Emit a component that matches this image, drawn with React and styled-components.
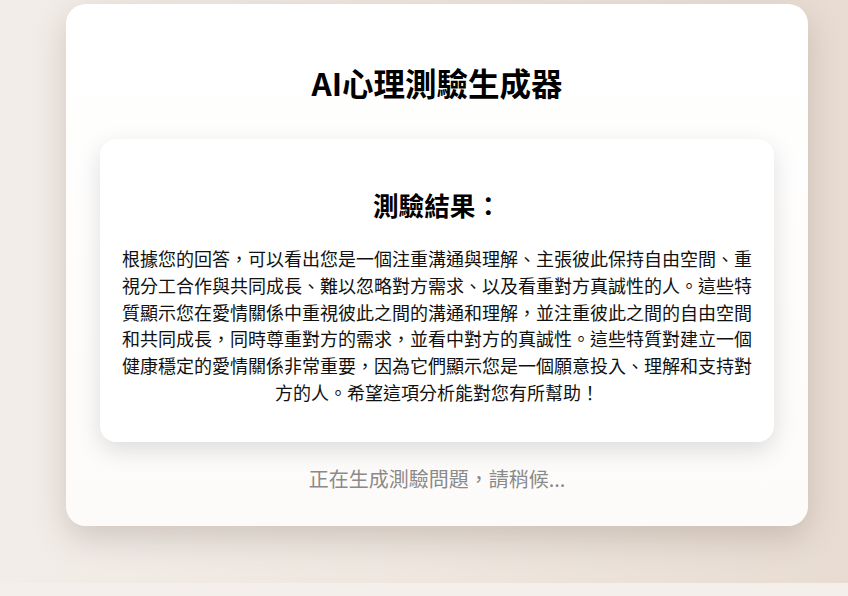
import styled, { createGlobalStyle } from "styled-components";

const GlobalStyle = createGlobalStyle`
  html, body {
    margin: 0;
    padding: 0;
    background: #f4efea;
  }
  body {
    font-family: "Noto Sans CJK TC", "Noto Sans", sans-serif;
    color: #111;
  }
`;

const Page = styled.div`
  height: 583px;
  box-sizing: border-box;
  padding: 4px 40px 0 66px;
  background: linear-gradient(90deg, #f2ede8 0%, #eee6df 50%, #e8dcd2 100%);
  overflow: hidden;
`;

const Card = styled.main`
  width: 742px;
  box-sizing: border-box;
  padding: 58px 34px 34px;
  background: linear-gradient(180deg, #ffffff 0%, #fdfbf9 100%);
  border-radius: 20px;
  box-shadow: 0 12px 32px rgba(90, 70, 55, 0.22);
  display: flex;
  flex-direction: column;
  align-items: stretch;
`;

const Title = styled.h1`
  margin: 0 0 37px;
  font-size: 31.5px;
  line-height: 40px;
  font-weight: 700;
  text-align: center;
  color: #000;
`;

const ResultBox = styled.section`
  background: #fff;
  border-radius: 16px;
  padding: 48px 21px 36px;
  box-shadow: 0 8px 24px rgba(0, 0, 0, 0.13);
  text-align: center;
`;

const ResultHeading = styled.h2`
  margin: 0 0 22px;
  font-size: 25.6px;
  line-height: 36px;
  font-weight: 700;
  color: #000;
`;

const ResultText = styled.p`
  margin: 0;
  font-size: 18px;
  line-height: 26.8px;
  color: #111;
`;

const Loading = styled.p`
  margin: 24px 0 0;
  font-size: 20px;
  line-height: 26px;
  text-align: center;
  color: #8a8a8a;
`;

const resultText =
  "根據您的回答，可以看出您是一個注重溝通與理解、主張彼此保持自由空間、重視分工合作與共同成長、難以忽略對方需求、以及看重對方真誠性的人。這些特質顯示您在愛情關係中重視彼此之間的溝通和理解，並注重彼此之間的自由空間和共同成長，同時尊重對方的需求，並看中對方的真誠性。這些特質對建立一個健康穩定的愛情關係非常重要，因為它們顯示您是一個願意投入、理解和支持對方的人。希望這項分析能對您有所幫助！";

export default function App() {
  return (
    <>
      <GlobalStyle />
      <Page>
        <Card>
          <Title>AI心理測驗生成器</Title>
          <ResultBox>
            <ResultHeading>測驗結果：</ResultHeading>
            <ResultText>{resultText}</ResultText>
          </ResultBox>
          <Loading>正在生成測驗問題，請稍候...</Loading>
        </Card>
      </Page>
    </>
  );
}
